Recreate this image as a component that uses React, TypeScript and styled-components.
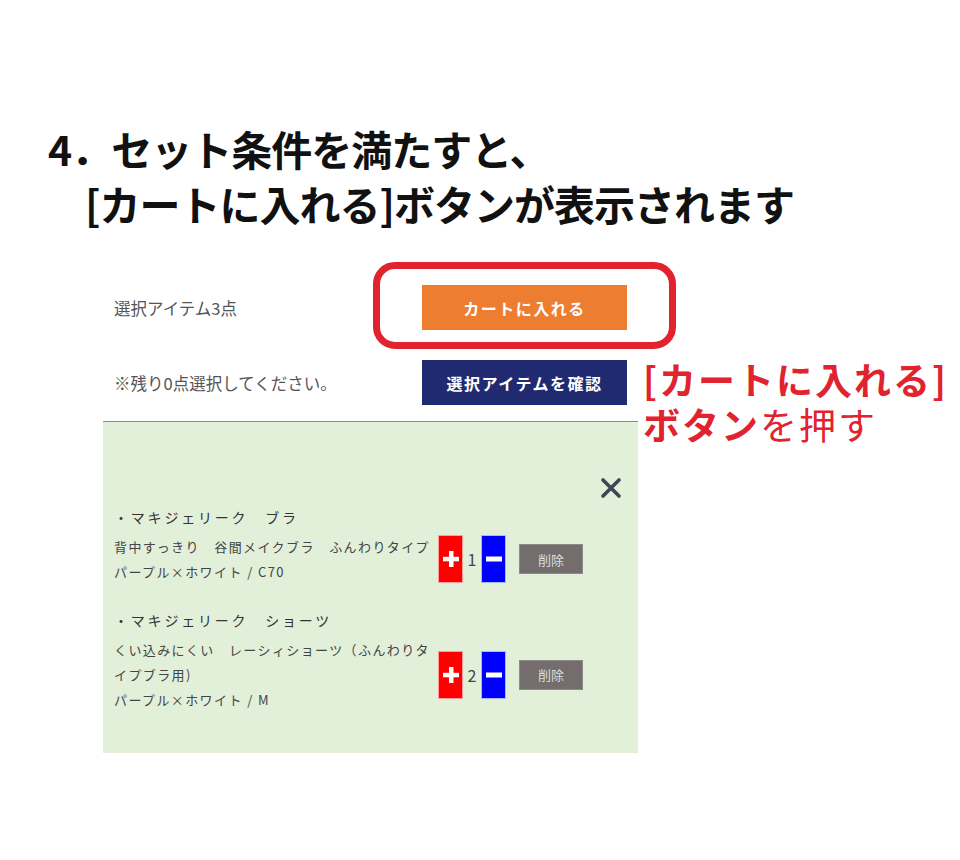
import React from "react";
import styled, { createGlobalStyle } from "styled-components";

const GlobalStyle = createGlobalStyle`
  body {
    margin: 0;
    background: #ffffff;
    font-family: "Noto Sans CJK JP", "Noto Sans", sans-serif;
  }
`;

interface CartItem {
  title: string;
  desc: string;
  variant: string;
  qty: number;
}

const items: CartItem[] = [
  {
    title: "・マキジェリーク　ブラ",
    desc: "背中すっきり　谷間メイクブラ　ふんわりタイプ",
    variant: "パープル×ホワイト / C70",
    qty: 1,
  },
  {
    title: "・マキジェリーク　ショーツ",
    desc: "くい込みにくい　レーシィショーツ（ふんわりタイプブラ用)",
    variant: "パープル×ホワイト / M",
    qty: 2,
  },
];

const Page = styled.div`
  width: 960px;
  min-height: 860px;
  padding-top: 121px;
  box-sizing: border-box;
`;

const Heading = styled.h1`
  margin: 0;
  padding-left: 48px;
  font-size: 41px;
  font-weight: 700;
  line-height: 55px;
  letter-spacing: -1px;
  color: #111111;
`;

const HeadLine = styled.div<{ $indent?: number }>`
  padding-left: ${(p) => p.$indent || 0}px;
  white-space: nowrap;
`;

const Content = styled.div`
  display: flex;
  align-items: flex-start;
  gap: 5px;
  margin: 54px 0 0 103px;
`;

const CartWidget = styled.div`
  width: 535px;
  flex-shrink: 0;
`;

const SummaryRow = styled.div<{ $offset?: number }>`
  display: flex;
  align-items: center;
  justify-content: space-between;
  height: 45px;
  padding: 0 11px;
  margin-top: ${(p) => p.$offset || 0}px;
`;

const Label = styled.span`
  font-size: 16.5px;
  color: #555555;
`;

const Highlight = styled.div`
  position: relative;

  &::after {
    content: "";
    position: absolute;
    top: -23px;
    left: -49px;
    right: -49px;
    bottom: -19px;
    border: 7px solid #e0232f;
    border-radius: 22px;
    pointer-events: none;
  }
`;

const ActionButton = styled.button<{ $bg: string }>`
  width: 205px;
  height: 45px;
  border: none;
  padding: 0;
  background: ${(p) => p.$bg};
  color: #ffffff;
  font-family: inherit;
  font-size: 16px;
  font-weight: 700;
  letter-spacing: 1.5px;
  cursor: pointer;
`;

const Panel = styled.div`
  margin-top: 16px;
  height: 332px;
  box-sizing: border-box;
  border-top: 1px solid #8a8a8a;
  background: #e2efd9;
  padding: 55px 16px 0 11px;
`;

const PanelHeader = styled.div`
  display: flex;
  justify-content: flex-end;
  height: 22px;
`;

const CloseButton = styled.button`
  width: 22px;
  height: 22px;
  padding: 0;
  border: none;
  background: none;
  cursor: pointer;

  svg {
    display: block;
  }
`;

const ItemList = styled.div`
  margin-top: 5px;
  display: flex;
  flex-direction: column;
  gap: 23px;
`;

const ItemTitle = styled.div`
  font-size: 14px;
  line-height: 26px;
  letter-spacing: 2.8px;
  color: #333333;
`;

const ItemRow = styled.div`
  display: flex;
  align-items: center;
  margin-top: 4px;
`;

const ItemText = styled.div`
  width: 322px;
  flex-shrink: 0;
  font-size: 13px;
  line-height: 25px;
  letter-spacing: 1.4px;
  color: #444444;
`;

const QtyButton = styled.button<{ $bg: string; $edge: string; $gap?: number }>`
  width: 25px;
  height: 48px;
  padding: 0;
  margin-left: ${(p) => p.$gap || 0}px;
  border: 1px solid ${(p) => p.$edge};
  background: ${(p) => p.$bg};
  display: flex;
  align-items: center;
  justify-content: center;
  cursor: pointer;

  svg {
    display: block;
  }
`;

const Qty = styled.span`
  width: 18px;
  text-align: center;
  font-size: 16px;
  color: #444444;
`;

const DeleteButton = styled.button`
  margin-left: 13px;
  width: 64px;
  height: 30px;
  padding: 0;
  border: 1px solid #8f8a88;
  background: #736e6d;
  color: #dddddd;
  font-family: inherit;
  font-size: 13px;
  cursor: pointer;
`;

const Annotation = styled.div`
  margin-top: 72px;
  color: #e0232f;
  font-size: 37px;
  line-height: 45px;
  letter-spacing: 2px;
  white-space: nowrap;
`;

const AnnotationLine = styled.div``;

const Strong = styled.span`
  font-weight: 700;
`;

const Light = styled.span`
  font-weight: 400;
`;

const PlusIcon = () => (
  <svg width="16" height="16" viewBox="0 0 16 16">
    <rect x="6" y="0" width="4.5" height="16" fill="#fff" />
    <rect x="0" y="5.8" width="16" height="4.5" fill="#fff" />
  </svg>
);

const MinusIcon = () => (
  <svg width="16" height="16" viewBox="0 0 16 16">
    <rect x="0" y="5.5" width="16" height="5" fill="#fff" />
  </svg>
);

const CloseIcon = () => (
  <svg width="22" height="22" viewBox="0 0 22 22">
    <path
      d="M3 3 L19 19 M19 3 L3 19"
      stroke="#3f4553"
      strokeWidth="3.6"
      strokeLinecap="round"
    />
  </svg>
);

const Item = ({ item }: { item: CartItem }) => (
  <div>
    <ItemTitle>{item.title}</ItemTitle>
    <ItemRow>
      <ItemText>
        <div>{item.desc}</div>
        <div>{item.variant}</div>
      </ItemText>
      <QtyButton $bg="#ff0000" $edge="#ff9c9c" $gap={2}>
        <PlusIcon />
      </QtyButton>
      <Qty>{item.qty}</Qty>
      <QtyButton $bg="#0000ff" $edge="#a8b8ff">
        <MinusIcon />
      </QtyButton>
      <DeleteButton>削除</DeleteButton>
    </ItemRow>
  </div>
);

const App = () => {
  return (
    <Page>
      <GlobalStyle />
      <Heading>
        <HeadLine>4．セット条件を満たすと、</HeadLine>
        <HeadLine $indent={37}>[カートに入れる]ボタンが表示されます</HeadLine>
      </Heading>

      <Content>
        <CartWidget>
          <SummaryRow>
            <Label>選択アイテム3点</Label>
            <Highlight>
              <ActionButton $bg="#ed7d31">カートに入れる</ActionButton>
            </Highlight>
          </SummaryRow>
          <SummaryRow $offset={30}>
            <Label>※残り0点選択してください。</Label>
            <ActionButton $bg="#1f2a70">選択アイテムを確認</ActionButton>
          </SummaryRow>

          <Panel>
            <PanelHeader>
              <CloseButton aria-label="閉じる">
                <CloseIcon />
              </CloseButton>
            </PanelHeader>
            <ItemList>
              {items.map((item) => (
                <Item key={item.title} item={item} />
              ))}
            </ItemList>
          </Panel>
        </CartWidget>

        <Annotation>
          <AnnotationLine>
            <Strong>[カートに入れる]</Strong>
          </AnnotationLine>
          <AnnotationLine>
            <Strong>ボタン</Strong>
            <Light>を押す</Light>
          </AnnotationLine>
        </Annotation>
      </Content>
    </Page>
  );
};

export default App;
